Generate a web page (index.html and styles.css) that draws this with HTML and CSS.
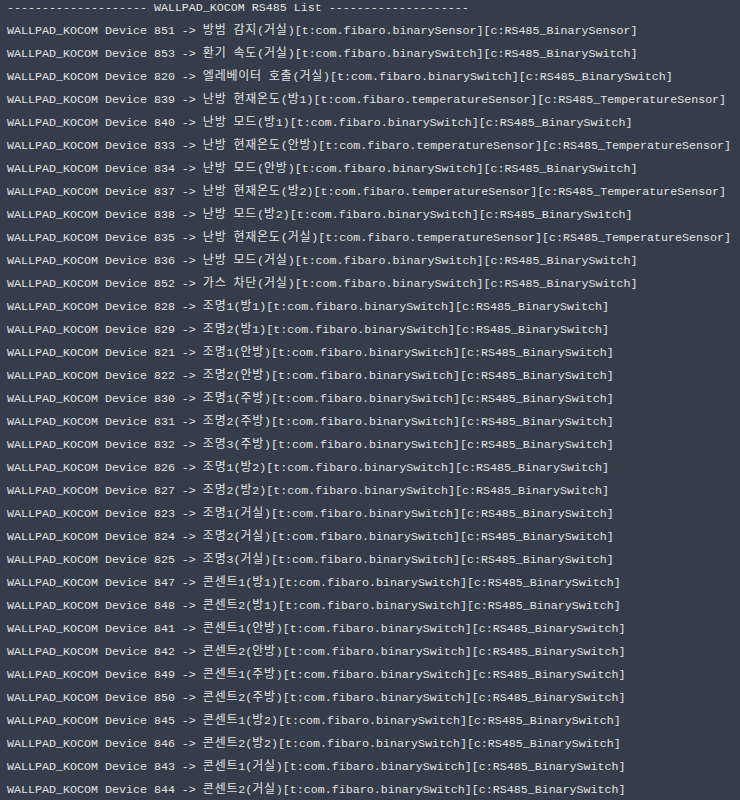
FILE: index.html
```html
<!DOCTYPE html>
<html lang="ko">
<head>
    <meta charset="UTF-8">
    <meta name="viewport" content="width=device-width, initial-scale=1.0">
    <title>WALLPAD_KOCOM RS485 List</title>
    <link rel="stylesheet" href="styles.css">
</head>
<body>

<div class="console" id="console">
    <div class="log-line">-------------------- WALLPAD_KOCOM RS485 List --------------------</div>
</div>

<script>
    const devices = [
        [851, '방범 감지(거실)', 'binarySensor', 'BinarySensor'],
        [853, '환기 속도(거실)', 'binarySwitch', 'BinarySwitch'],
        [820, '엘레베이터 호출(거실)', 'binarySwitch', 'BinarySwitch'],
        [839, '난방 현재온도(방1)', 'temperatureSensor', 'TemperatureSensor'],
        [840, '난방 모드(방1)', 'binarySwitch', 'BinarySwitch'],
        [833, '난방 현재온도(안방)', 'temperatureSensor', 'TemperatureSensor'],
        [834, '난방 모드(안방)', 'binarySwitch', 'BinarySwitch'],
        [837, '난방 현재온도(방2)', 'temperatureSensor', 'TemperatureSensor'],
        [838, '난방 모드(방2)', 'binarySwitch', 'BinarySwitch'],
        [835, '난방 현재온도(거실)', 'temperatureSensor', 'TemperatureSensor'],
        [836, '난방 모드(거실)', 'binarySwitch', 'BinarySwitch'],
        [852, '가스 차단(거실)', 'binarySwitch', 'BinarySwitch'],
        [828, '조명1(방1)', 'binarySwitch', 'BinarySwitch'],
        [829, '조명2(방1)', 'binarySwitch', 'BinarySwitch'],
        [821, '조명1(안방)', 'binarySwitch', 'BinarySwitch'],
        [822, '조명2(안방)', 'binarySwitch', 'BinarySwitch'],
        [830, '조명1(주방)', 'binarySwitch', 'BinarySwitch'],
        [831, '조명2(주방)', 'binarySwitch', 'BinarySwitch'],
        [832, '조명3(주방)', 'binarySwitch', 'BinarySwitch'],
        [826, '조명1(방2)', 'binarySwitch', 'BinarySwitch'],
        [827, '조명2(방2)', 'binarySwitch', 'BinarySwitch'],
        [823, '조명1(거실)', 'binarySwitch', 'BinarySwitch'],
        [824, '조명2(거실)', 'binarySwitch', 'BinarySwitch'],
        [825, '조명3(거실)', 'binarySwitch', 'BinarySwitch'],
        [847, '콘센트1(방1)', 'binarySwitch', 'BinarySwitch'],
        [848, '콘센트2(방1)', 'binarySwitch', 'BinarySwitch'],
        [841, '콘센트1(안방)', 'binarySwitch', 'BinarySwitch'],
        [842, '콘센트2(안방)', 'binarySwitch', 'BinarySwitch'],
        [849, '콘센트1(주방)', 'binarySwitch', 'BinarySwitch'],
        [850, '콘센트2(주방)', 'binarySwitch', 'BinarySwitch'],
        [845, '콘센트1(방2)', 'binarySwitch', 'BinarySwitch'],
        [846, '콘센트2(방2)', 'binarySwitch', 'BinarySwitch'],
        [843, '콘센트1(거실)', 'binarySwitch', 'BinarySwitch'],
        [844, '콘센트2(거실)', 'binarySwitch', 'BinarySwitch']
    ];

    // hangul goes in its own span so it keeps the wide korean cell
    function markKorean(text) {
        return text.replace(/([\uAC00-\uD7A3]+)/g, '<span class="ko">$1</span>');
    }

    const consoleBox = document.getElementById('console');
    devices.forEach(([id, name, type, cls]) => {
        const line = document.createElement('div');
        line.className = 'log-line';
        line.innerHTML = `WALLPAD_KOCOM Device ${id} -&gt; ${markKorean(name)}[t:com.fibaro.${type}][c:RS485_${cls}]`;
        consoleBox.appendChild(line);
    });
</script>
</body>
</html>
```

FILE: styles.css
```css
html, body {
    margin: 0;
    background-color: #353d4b;
}
body {
    overflow: hidden;
}
.console {
    margin-top: -3px;
    padding-left: 7px;
    color: #e2e2e2;
    font-family: "Liberation Mono", "Noto Sans CJK KR", monospace;
    font-size: 11.67px;
}
.log-line {
    height: 23px;
    line-height: 23px;
    white-space: pre;
}
.ko {
    font-family: "Noto Sans CJK KR", sans-serif;
    font-size: 12px;
    line-height: 12px;
    letter-spacing: 0.75px;
}
```
